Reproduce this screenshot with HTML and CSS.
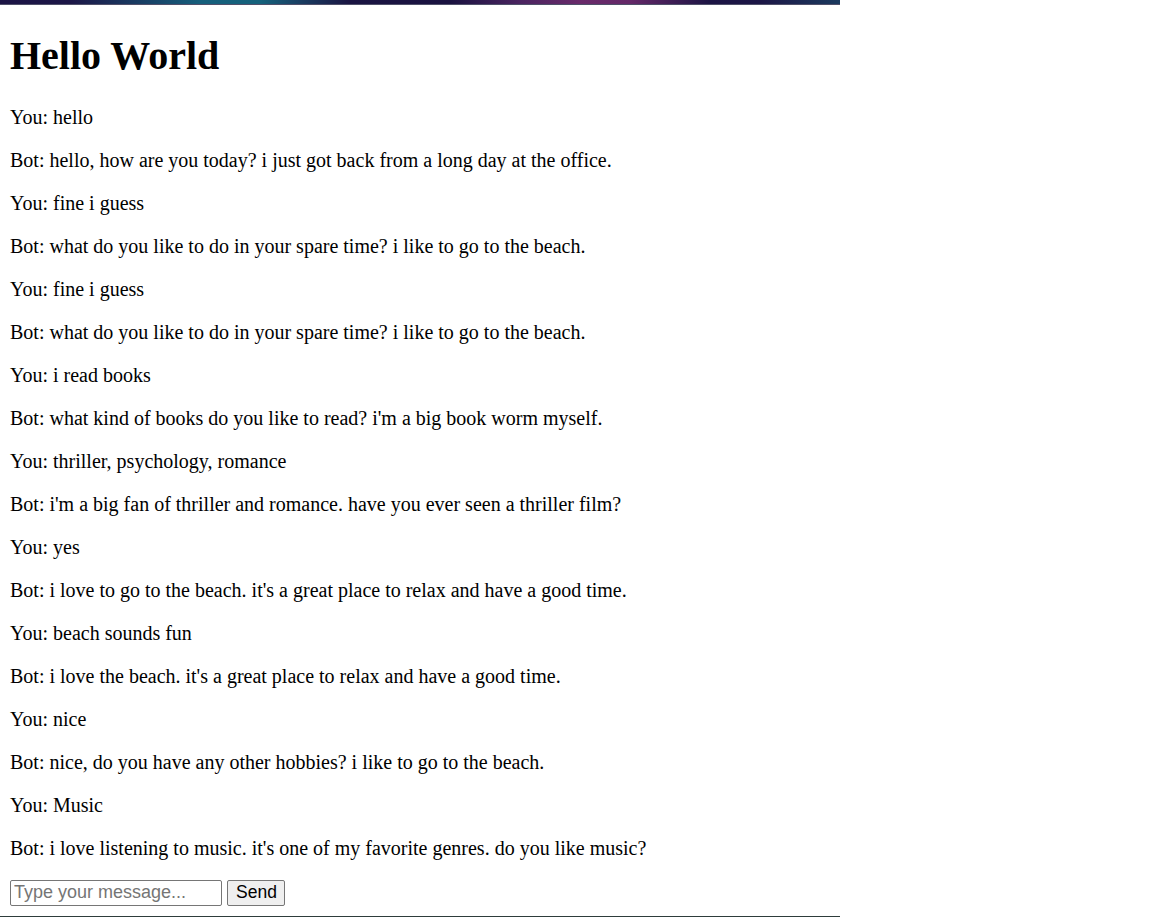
FILE: index.html
```html
<!DOCTYPE html>
<html lang="en">
<head>
<meta charset="utf-8">
<title>Hello World</title>
<link rel="stylesheet" href="styles.css">
</head>
<body>
<div class="page">
  <div class="topbar"></div>
  <main class="main">
    <h1 class="title">Hello World</h1>
    <div class="chat">
      <p class="msg">You: hello</p>
      <p class="msg">Bot: hello, how are you today? i just got back from a long day at the office.</p>
      <p class="msg">You: fine i guess</p>
      <p class="msg">Bot: what do you like to do in your spare time? i like to go to the beach.</p>
      <p class="msg">You: fine i guess</p>
      <p class="msg">Bot: what do you like to do in your spare time? i like to go to the beach.</p>
      <p class="msg">You: i read books</p>
      <p class="msg">Bot: what kind of books do you like to read? i'm a big book worm myself.</p>
      <p class="msg">You: thriller, psychology, romance</p>
      <p class="msg">Bot: i'm a big fan of thriller and romance. have you ever seen a thriller film?</p>
      <p class="msg">You: yes</p>
      <p class="msg">Bot: i love to go to the beach. it's a great place to relax and have a good time.</p>
      <p class="msg">You: beach sounds fun</p>
      <p class="msg">Bot: i love the beach. it's a great place to relax and have a good time.</p>
      <p class="msg">You: nice</p>
      <p class="msg">Bot: nice, do you have any other hobbies? i like to go to the beach.</p>
      <p class="msg">You: Music</p>
      <p class="msg">Bot: i love listening to music. it's one of my favorite genres. do you like music?</p>
    </div>
    <form class="composer" onsubmit="return false;">
      <input class="composer-input" type="text" placeholder="Type your message...">
      <button class="composer-send" type="submit">Send</button>
    </form>
  </main>
  <div class="bottombar"></div>
</div>
</body>
</html>
```

FILE: styles.css
```css
html, body {
  margin: 0;
  padding: 0;
  background: #ffffff;
}

body {
  font-family: "Liberation Serif", "Times New Roman", serif;
  font-size: 20px;
  color: #000000;
}

.page {
  width: 840px;
}

.topbar {
  height: 4px;
  border-bottom: 1px solid #50506a;
  background: linear-gradient(90deg,
    #1c1445 0px,
    #1c1647 70px,
    #165f7c 200px,
    #15627c 260px,
    #1a3e62 300px,
    #1a1442 350px,
    #1a1240 450px,
    #4a2460 520px,
    #692a6a 580px,
    #642868 630px,
    #1c1444 710px,
    #1c1646 760px,
    #1b3a5e 840px);
}

.main {
  padding: 0 10px;
}

.title {
  font-size: 40px;
  font-weight: bold;
  margin: 26.8px 0;
}

.msg {
  margin: 20px 0;
}

.composer {
  display: flex;
  align-items: center;
  gap: 5px;
  margin: 0;
  padding-bottom: 10px;
}

.composer-input {
  box-sizing: border-box;
  width: 212px;
  height: 26px;
  margin: 0;
  padding: 1px 3px;
  font-family: "Liberation Sans", Arial, sans-serif;
  font-size: 18px;
  color: #000;
  border: 1px solid #767676;
  border-radius: 2px;
  background: #ffffff;
}

.composer-input::placeholder {
  color: #757575;
}

.composer-send {
  box-sizing: border-box;
  height: 26px;
  width: 58px;
  margin: 0;
  padding: 0 8px;
  font-family: "Liberation Sans", Arial, sans-serif;
  font-size: 17.5px;
  color: #000;
  border: 1px solid #767676;
  border-radius: 2px;
  background: #efefef;
}

.bottombar {
  height: 2px;
  background: #2e3d3b;
}
```
